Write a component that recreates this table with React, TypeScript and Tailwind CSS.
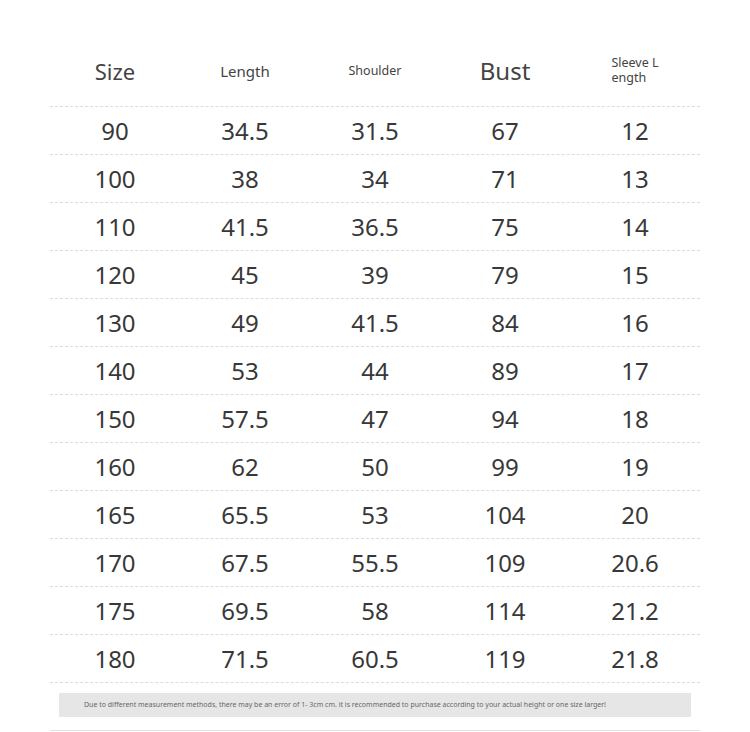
const rows = [
  ['90', '34.5', '31.5', '67', '12'],
  ['100', '38', '34', '71', '13'],
  ['110', '41.5', '36.5', '75', '14'],
  ['120', '45', '39', '79', '15'],
  ['130', '49', '41.5', '84', '16'],
  ['140', '53', '44', '89', '17'],
  ['150', '57.5', '47', '94', '18'],
  ['160', '62', '50', '99', '19'],
  ['165', '65.5', '53', '104', '20'],
  ['170', '67.5', '55.5', '109', '20.6'],
  ['175', '69.5', '58', '114', '21.2'],
  ['180', '71.5', '60.5', '119', '21.8'],
]

export default function App() {
  return (
    <div className="w-[750px] h-[732px] bg-white overflow-hidden" style={{ fontFamily: '"Noto Sans", sans-serif' }}>
      <div className="mx-[50px]">
        {/* header */}
        <div className="grid grid-cols-5 h-[107px] pt-[36px] items-center text-[#444] border-b border-dashed border-[#dcdcdc]">
          <div className="text-center text-[22px]">Size</div>
          <div className="text-center text-[15px]">Length</div>
          <div className="text-center text-[12.5px]">Shoulder</div>
          <div className="text-center text-[24px]">Bust</div>
          <div className="text-center">
            <div className="inline-block text-left text-[12.5px] leading-[15px]">
              Sleeve L<br />ength
            </div>
          </div>
        </div>

        {/* rows */}
        {rows.map((r) => (
          <div key={r[0]} className="grid grid-cols-5 h-[48px] items-center text-[24px] text-[#383838] border-b border-dashed border-[#dcdcdc]">
            {r.map((v, i) => (
              <div key={i} className="text-center leading-none">{v}</div>
            ))}
          </div>
        ))}

        {/* note */}
        <div className="mt-[10px] mx-[9px] w-[632px] h-[24px] bg-[#e6e6e6] flex items-center pl-[25px] text-[7px] text-[#666]">
          Due to different measurement methods, there may be an error of 1- 3cm cm. it is recommended to purchase according to your actual height or one size larger!
        </div>
        <div className="mt-[13px] border-t border-[#e2e2e2]" />
      </div>
    </div>
  )
}
